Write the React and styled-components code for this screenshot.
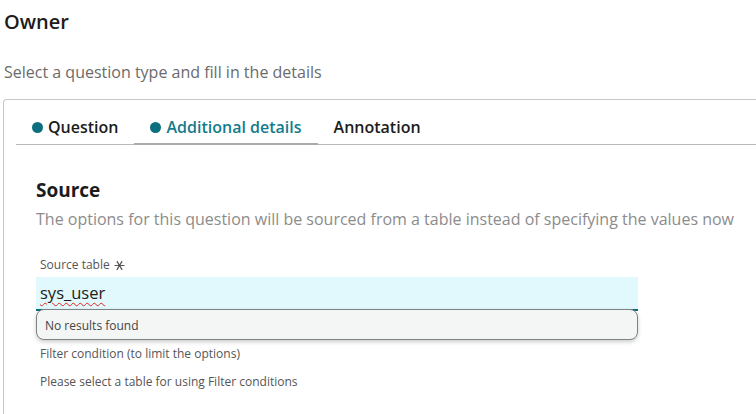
import React from "react"
import styled, { createGlobalStyle } from "styled-components"

const GlobalStyle = createGlobalStyle`
  html, body {
    margin: 0;
    padding: 0;
    background: #ffffff;
    overflow: hidden;
  }
  body {
    font-family: "Open Sans", "Liberation Sans", sans-serif;
    color: #1c1c1c;
  }
`

const tabs = [
  { label: "Question", dot: true },
  { label: "Additional details", dot: true, active: true },
  { label: "Annotation" },
]

export default function App() {
  return (
    <>
      <GlobalStyle />
      <Page>
        <Title>Owner</Title>
        <Subtitle>Select a question type and fill in the details</Subtitle>
        <Card>
          <TabBar>
            {tabs.map((t) => (
              <Tab key={t.label} $active={t.active}>
                {t.dot && <Dot />}
                {t.label}
              </Tab>
            ))}
          </TabBar>
          <Content>
            <Heading>Source</Heading>
            <Description>
              The options for this question will be sourced from a table instead of specifying the values now
            </Description>
            <Label>
              Source table
              <Asterisk viewBox="0 0 10 10">
                <path d="M0.5 5H9.5M2.6 1L7.4 9M7.4 1L2.6 9" />
              </Asterisk>
            </Label>
            <Field>
              <Misspelled>sys_user</Misspelled>
            </Field>
            <Menu>No results found</Menu>
            <Hint>Filter condition (to limit the options)</Hint>
            <Note>Please select a table for using Filter conditions</Note>
          </Content>
        </Card>
      </Page>
    </>
  )
}

const Page = styled.div`
  padding-left: 4px;
  height: 414px;
  display: flex;
  flex-direction: column;
`

const Title = styled.h1`
  margin: 8px 0 0;
  font-size: 20px;
  line-height: 28px;
  font-weight: 600;
  color: #1c1c1c;
`

const Subtitle = styled.p`
  margin: 26px 0 0;
  font-size: 16px;
  line-height: 21px;
  color: #6b6b6b;
`

const Card = styled.section`
  margin: 16px -20px 0 -1px;
  flex: 1;
  border: 1px solid #c6c6c6;
  border-bottom: none;
  border-radius: 4px 0 0 0;
  padding-left: 12px;
`

const TabBar = styled.div`
  display: flex;
  margin-top: 10px;
  border-bottom: 1px solid #b7b9ba;
`

const Tab = styled.div`
  display: flex;
  align-items: center;
  gap: 5px;
  padding: 6px 16px 5px;
  margin-bottom: -1px;
  font-size: 16px;
  line-height: 22px;
  font-weight: 600;
  color: ${(p) => (p.$active ? "#147b8c" : "#1c1c1c")};
  border-bottom: 2px solid ${(p) => (p.$active ? "#a9abad" : "transparent")};
`

const Dot = styled.span`
  width: 11px;
  height: 11px;
  border-radius: 50%;
  background: #0c6f80;
`

const Content = styled.div`
  padding: 32px 0 0 20px;
  width: 602px;
`

const Heading = styled.h2`
  margin: 0;
  font-size: 19px;
  line-height: 26px;
  font-weight: 700;
  color: #1c1c1c;
`

const Description = styled.p`
  margin: 5px 0 0;
  font-size: 16px;
  line-height: 22px;
  color: #8c8c8c;
  white-space: nowrap;
`

const Label = styled.div`
  display: flex;
  align-items: center;
  gap: 4px;
  margin: 27px 0 0 4px;
  font-size: 12px;
  line-height: 16px;
  color: #555555;
`

const Asterisk = styled.svg`
  width: 11px;
  height: 11px;
  stroke: #555555;
  stroke-width: 1.1;
  fill: none;
`

const Field = styled.div`
  margin-top: 4px;
  height: 32px;
  padding-left: 4px;
  background: #e1f9fd;
  border-bottom: 2px solid #0b6c7c;
  font-size: 16.5px;
  line-height: 32px;
  color: #1c1c1c;
`

const Misspelled = styled.span`
  text-decoration: underline wavy #e3261c;
  text-decoration-thickness: 1px;
  text-underline-offset: 3px;
`

const Menu = styled.div`
  position: relative;
  margin-top: -2px;
  height: 29px;
  padding-left: 8px;
  background: #f4f5f5;
  border: 1px solid #7d8384;
  border-radius: 8px;
  box-shadow: 0 2px 4px rgba(0, 0, 0, 0.2);
  font-size: 12px;
  line-height: 31px;
  color: #444444;
`

const Hint = styled.div`
  margin: 6px 0 0 4px;
  font-size: 12px;
  line-height: 16px;
  color: #555555;
`

const Note = styled.div`
  margin: 12px 0 0 4px;
  font-size: 12px;
  line-height: 16px;
  color: #555555;
`
